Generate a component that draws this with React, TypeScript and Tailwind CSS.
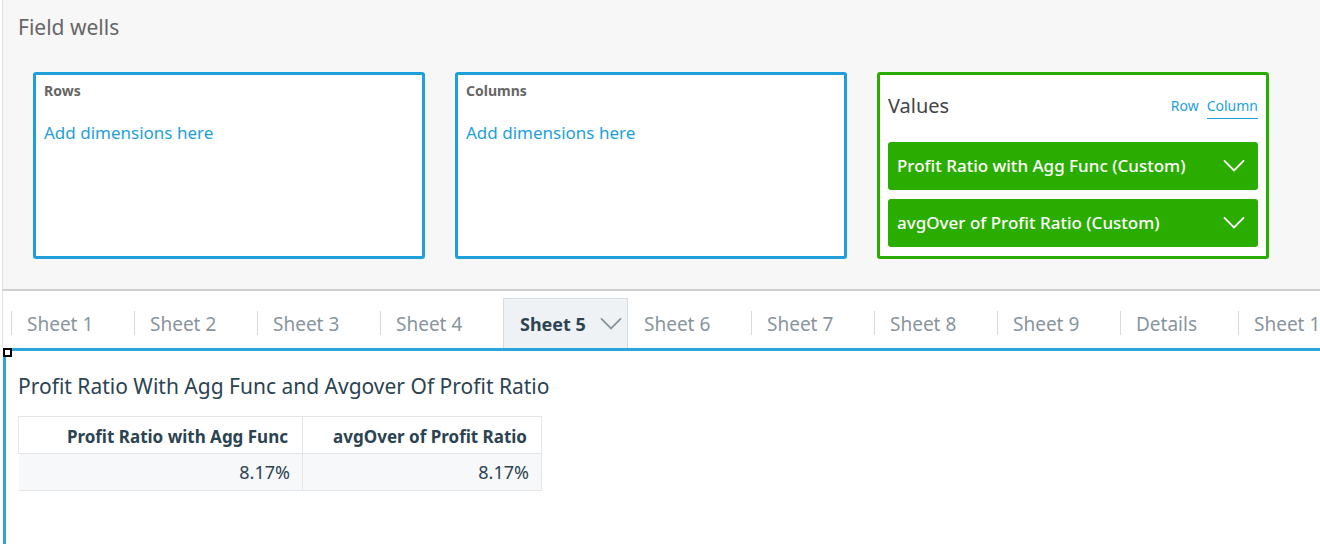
import { useState } from "react";

const sheets = [
  { id: "s1", label: "Sheet 1" },
  { id: "s2", label: "Sheet 2" },
  { id: "s3", label: "Sheet 3" },
  { id: "s4", label: "Sheet 4" },
  { id: "s5", label: "Sheet 5" },
  { id: "s6", label: "Sheet 6" },
  { id: "s7", label: "Sheet 7" },
  { id: "s8", label: "Sheet 8" },
  { id: "s9", label: "Sheet 9" },
  { id: "details", label: "Details" },
  { id: "s11", label: "Sheet 1" },
];

const measures = ["Profit Ratio with Agg Func (Custom)", "avgOver of Profit Ratio (Custom)"];

const columns = [
  { label: "Profit Ratio with Agg Func", value: "8.17%" },
  { label: "avgOver of Profit Ratio", value: "8.17%" },
];

function Chevron() {
  return (
    <svg width="22" height="14" viewBox="0 0 22 14" fill="none" stroke="currentColor" strokeWidth="1.8" strokeLinecap="round" aria-hidden="true" className="shrink-0">
      <path d="M1.5 1.8 L11 11.5 L20.5 1.8" />
    </svg>
  );
}

function DimensionWell({ title }: { title: string }) {
  return (
    <section className="min-h-[187px] rounded-[3px] border-3 border-[#1f9fd9] bg-white px-2 py-1.5">
      <h2 className="text-sm leading-5 font-bold text-[#666]">{title}</h2>
      <button type="button" className="mt-[18px] block text-[17px] leading-7 text-[#259fd9]">
        Add dimensions here
      </button>
    </section>
  );
}

function ValuesWell() {
  const [layout, setLayout] = useState("Column");
  return (
    <section className="min-h-[187px] rounded-[3px] border-3 border-[#2bad00] bg-white px-2 pt-[17px]">
      <div className="flex items-center justify-between">
        <h2 className="text-xl leading-7 text-[#444]">Values</h2>
        <div className="flex gap-2 text-sm leading-6 text-[#259fd9]">
          {["Row", "Column"].map((name) => (
            <button
              key={name}
              type="button"
              aria-pressed={layout === name}
              onClick={() => setLayout(name)}
              className={layout === name ? "border-b border-[#259fd9]" : "border-b border-transparent"}
            >
              {name}
            </button>
          ))}
        </div>
      </div>
      <div className="mt-[22px] flex flex-col gap-[9px]">
        {measures.map((name) => (
          <button
            key={name}
            type="button"
            className="flex h-12 w-full items-center justify-between rounded-[3px] bg-[#2bad00] pr-[13px] pl-[9px] text-left text-[17px] font-medium whitespace-nowrap text-white"
          >
            {name}
            <Chevron />
          </button>
        ))}
      </div>
    </section>
  );
}

export default function App() {
  const [active, setActive] = useState("s5");
  return (
    <div className="flex min-h-screen flex-col overflow-x-hidden bg-white pl-0.5 font-['Noto_Sans',sans-serif]">
      <header className="border-b-2 border-l border-b-[#cfcfcf] border-l-[#e2e2e2] bg-[#f7f7f7] pr-[51px] pb-[30px] pl-[30px]">
        <h1 className="-ml-[15px] pt-[13px] text-[21px] leading-7 text-[#666]">Field wells</h1>
        <div className="mt-[31px] grid grid-cols-3 gap-[30px]">
          <DimensionWell title="Rows" />
          <DimensionWell title="Columns" />
          <ValuesWell />
        </div>
      </header>

      <nav aria-label="Sheets" className="flex h-[57px] items-end overflow-hidden border-l border-[#e2e2e2] pl-2">
        {sheets.map(({ id, label }, index) =>
          id === active ? (
            <button
              key={id}
              type="button"
              aria-current="page"
              className="flex h-[50px] w-[125px] shrink-0 items-center justify-between border border-b-0 border-[#d5dbdf] bg-[#eef2f5] pr-[5px] pl-4 text-lg font-bold text-[#2c4352]"
            >
              {label}
              <span className="text-[#87949c]">
                <Chevron />
              </span>
            </button>
          ) : (
            <button
              key={id}
              type="button"
              onClick={() => setActive(id)}
              className={`flex h-[50px] shrink-0 items-center text-[19px] whitespace-nowrap text-[#88959d] ${id === "details" ? "w-[118px]" : "w-[123px]"}`}
            >
              <span className={`flex h-6 items-center border-l pt-0.5 pl-[15px] ${sheets[index - 1]?.id === active ? "border-transparent" : "border-[#d5dbdf]"}`}>
                {label}
              </span>
            </button>
          ),
        )}
      </nav>

      <main className="relative ml-px flex-1 border-t-3 border-l-3 border-[#2aa5dc] px-3 pt-[21px]">
        <span className="absolute -top-[3px] -left-[3px] size-[9px] border-2 border-black bg-white" />
        <h2 className="text-[21px] leading-7 text-[#2c4352]">Profit Ratio With Agg Func and Avgover Of Profit Ratio</h2>
        <table className="mt-4 border-collapse text-right text-[17px] text-[#2c4352]">
          <thead>
            <tr className="h-[37px]">
              {columns.map((column, index) => (
                <th key={column.label} scope="col" className={`border border-[#e3e6e8] pt-1 pr-3.5 pb-0 pl-0 font-bold whitespace-nowrap ${index === 0 ? "w-[284px]" : "w-[239px]"}`}>
                  {column.label}
                </th>
              ))}
            </tr>
          </thead>
          <tbody>
            <tr className="h-[37px] bg-[#f6f8fa]">
              {columns.map((column) => (
                <td key={column.label} className="border-r border-b border-[#e3e6e8] py-0 pr-3 text-lg">
                  {column.value}
                </td>
              ))}
            </tr>
          </tbody>
        </table>
      </main>
    </div>
  );
}
